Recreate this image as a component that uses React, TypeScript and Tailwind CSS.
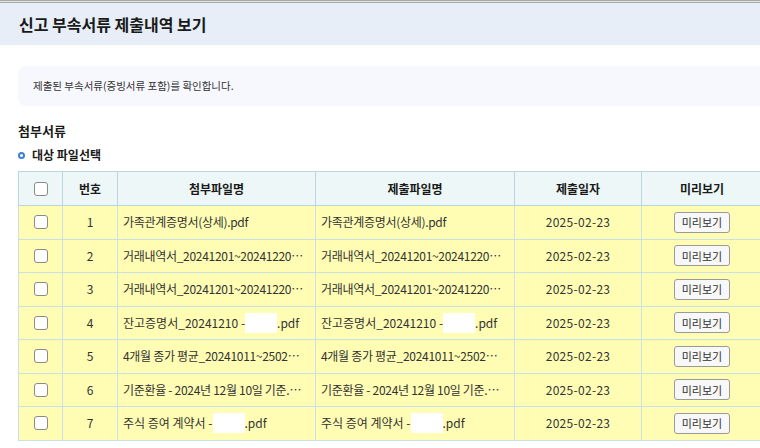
const rows = [
  { no: 1, name: "가족관계증명서(상세).pdf" },
  { no: 2, name: "거래내역서_20241201~20241220…" },
  { no: 3, name: "거래내역서_20241201~20241220…" },
  { no: 4, name: "잔고증명서_20241210 - ", mask: true },
  { no: 5, name: "4개월 종가 평균_20241011~2502…" },
  { no: 6, name: "기준환율 - 2024년 12월 10일 기준.…" },
  { no: 7, name: "주식 증여 계약서 - ", mask: true },
];

function Check() {
  return (
    <span className="mx-auto block h-[14px] w-[14px] rounded-[3px] border border-[#8a8a8a] bg-white" />
  );
}

function FileName({ text, mask }: { text: string; mask?: boolean }) {
  if (mask) {
    return (
      <span className="flex items-center whitespace-nowrap">
        {text}
        <span className="inline-block h-[20px] w-[32px] bg-white" />
        .pdf
      </span>
    );
  }
  return <span className="block overflow-hidden whitespace-nowrap tracking-[-0.3px]">{text}</span>;
}

export default function App() {
  return (
    <div
      className="h-[448px] w-[760px] overflow-hidden bg-white text-[#333]"
      style={{ fontFamily: '"Noto Sans CJK KR", "Noto Sans", sans-serif' }}
    >
      <div className="h-[3px] border-t border-b border-[#a8a8a8] bg-[#e4e4e4]" />
      <div className="flex h-[42px] items-center bg-[#e8eef8] pl-[19px]">
        <h1 className="text-[16px] font-bold text-[#1a1a1a]">신고 부속서류 제출내역 보기</h1>
      </div>

      <div className="pl-[18px] pt-[21px]">
        <div className="flex h-[40px] items-center rounded-l-lg bg-[#f7f8fd] pl-[15px] text-[10.5px] text-[#333]">
          제출된 부속서류(증빙서류 포함)를 확인합니다.
        </div>

        <h2 className="mt-[15px] text-[13px] font-bold leading-[20px] text-[#1a1a1a]">첨부서류</h2>
        <div className="mt-[4px] flex items-center gap-[7px] text-[12px] font-bold leading-[20px] text-[#1a1a1a]">
          <span className="h-[7px] w-[7px] rounded-full border-2 border-[#3f7fd8]" />
          대상 파일선택
        </div>

        <table className="mt-[6px] w-[760px] table-fixed border-collapse text-[12px]">
          <colgroup>
            <col className="w-[44px]" />
            <col className="w-[55px]" />
            <col className="w-[198px]" />
            <col className="w-[199px]" />
            <col className="w-[127px]" />
            <col className="w-[137px]" />
          </colgroup>
          <thead>
            <tr className="h-[34px] bg-[#eef7f7] text-[#1a1a1a]">
              <th className="border border-[#b9d7dd]">
                <Check />
              </th>
              <th className="border border-[#b9d7dd] font-bold">번호</th>
              <th className="border border-[#b9d7dd] font-bold">첨부파일명</th>
              <th className="border border-[#b9d7dd] font-bold">제출파일명</th>
              <th className="border border-[#b9d7dd] font-bold">제출일자</th>
              <th className="border border-[#b9d7dd] pr-[16px] font-bold">미리보기</th>
            </tr>
          </thead>
          <tbody>
            {rows.map((r) => (
              <tr key={r.no} className="h-[33.5px] bg-[#fefdb3]">
                <td className="border border-[#c9e0e8]">
                  <Check />
                </td>
                <td className="border border-[#c9e0e8] text-center">{r.no}</td>
                <td className="overflow-hidden border border-[#c9e0e8] pl-[5px] pr-[2px]">
                  <FileName text={r.name} mask={r.mask} />
                </td>
                <td className="overflow-hidden border border-[#c9e0e8] pl-[5px] pr-[2px]">
                  <FileName text={r.name} mask={r.mask} />
                </td>
                <td className="border border-[#c9e0e8] text-center tracking-[0.3px]">2025-02-23</td>
                <td className="border border-[#c9e0e8] pr-[16px] text-center">
                  <button className="h-[21px] w-[56px] rounded-[3px] border border-[#9a9a9a] bg-[#f8f8f8] text-[11px] text-[#333]">
                    미리보기
                  </button>
                </td>
              </tr>
            ))}
          </tbody>
        </table>
      </div>
    </div>
  );
}
